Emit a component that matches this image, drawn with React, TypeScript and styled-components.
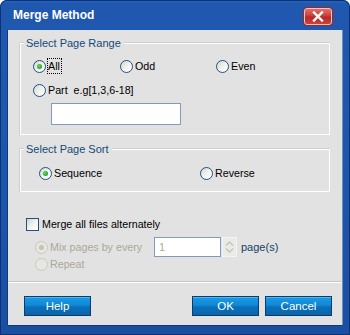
import React from "react";
import styled, { createGlobalStyle, css } from "styled-components";

const Global = createGlobalStyle`
  html, body { margin: 0; padding: 0; background: #ffffff; }
  * { box-sizing: border-box; }
  body { font-family: "Liberation Sans", Arial, sans-serif; font-size: 10.7px; }
`;

const Window = styled.div`
  width: 350px;
  height: 335px;
  display: flex;
  flex-direction: column;
  background: linear-gradient(180deg, #2b66c0 0px, #1f58ae 4px, #1d55aa 60%, #1a4fa0 100%);
  border-radius: 7px 7px 0 0;
  box-shadow: inset 0 0 0 1px #0b3278;
  padding: 0 8px 10px 8px;
`;

const TitleBar = styled.div`
  height: 30px;
  flex: none;
  display: flex;
  align-items: center;
  justify-content: space-between;
  padding: 0 10px 0 5px;
`;

const Title = styled.div`
  color: #ffffff;
  font-weight: bold;
  font-size: 12px;
  letter-spacing: 0;
`;

const CloseButton = styled.div`
  width: 28px;
  height: 17px;
  margin-top: 2px;
  border-radius: 3px;
  border: 1px solid #f2c3c0;
  background: linear-gradient(180deg, #e0716a 0%, #cc3e38 45%, #b92824 55%, #c9443e 100%);
  display: flex;
  align-items: center;
  justify-content: center;
  box-shadow: 0 0 0 1px #9b2a27;
`;

const Client = styled.div`
  flex: 1;
  display: flex;
  flex-direction: column;
  background: #e2e2e2;
  box-shadow: -1px 0 0 #0f3a7d, 0 1px 0 #0f3a7d, 1px 0 0 #6d8fc5;
`;

const Body = styled.div`
  flex: 1;
  display: flex;
  flex-direction: column;
  padding: 13px 12px 0 12px;
`;

const Group = styled.div<{ $mt?: number; $pt: number; $pb: number; $pl: number }>`
  position: relative;
  margin-top: ${(p) => p.$mt ?? 0}px;
  border: 1px solid #ffffff;
  box-shadow: 0 -1px 0 #cfcfcf, -1px 0 0 #cfcfcf;
  padding: ${(p) => p.$pt}px 0 ${(p) => p.$pb}px ${(p) => p.$pl}px;
  display: flex;
  flex-direction: column;
`;

const Legend = styled.div`
  position: absolute;
  top: -7px;
  left: 3px;
  padding: 0 3px 0 2px;
  background: #e2e2e2;
  color: #154a78;
  line-height: 13px;
  font-size: 11px;
`;

const Row = styled.div<{ $mt?: number; $ml?: number; $h?: number }>`
  display: flex;
  align-items: center;
  height: ${(p) => p.$h ?? 16}px;
  margin-top: ${(p) => p.$mt ?? 0}px;
  margin-left: ${(p) => p.$ml ?? 0}px;
`;

const Option = styled.div<{ $w?: number }>`
  display: flex;
  align-items: center;
  ${(p) => (p.$w ? css`width: ${p.$w}px;` : "")}
  flex: none;
`;

const RadioCircle = styled.span<{ $checked?: boolean; $disabled?: boolean }>`
  width: 13px;
  height: 13px;
  border-radius: 50%;
  flex: none;
  display: flex;
  align-items: center;
  justify-content: center;
  border: 1px solid ${(p) => (p.$disabled ? "#cac8bb" : "#1d5281")};
  background: ${(p) =>
    p.$disabled
      ? "#e6e6e2"
      : "linear-gradient(135deg, #d4d4ce 0%, #f4f4f2 55%, #ffffff 100%)"};
  &::after {
    content: "";
    display: ${(p) => (p.$checked ? "block" : "none")};
    width: 5px;
    height: 5px;
    border-radius: 50%;
    background: ${(p) =>
      p.$disabled ? "#c4c2b6" : "radial-gradient(circle at 40% 40%, #5fe05f, #21a121 70%)"};
  }
`;

const Label = styled.span<{ $disabled?: boolean; $focus?: boolean; $gap?: number }>`
  margin-left: ${(p) => p.$gap ?? 2}px;
  color: ${(p) => (p.$disabled ? "#aca899" : "#000000")};
  white-space: pre;
  line-height: 14px;
  ${(p) =>
    p.$focus &&
    css`
      outline: 1px dotted #000;
      outline-offset: 0px;
      padding: 0 1px 0 0;
    `}
`;

const TextBox = styled.div<{ $w: number; $h: number; $ml?: number; $mt?: number }>`
  width: ${(p) => p.$w}px;
  height: ${(p) => p.$h}px;
  margin-left: ${(p) => p.$ml ?? 0}px;
  margin-top: ${(p) => p.$mt ?? 0}px;
  background: #ffffff;
  border: 1px solid #7f9db9;
  color: #aca899;
  padding: 0 4px;
  display: flex;
  align-items: center;
  flex: none;
  font-size: 11px;
`;

const Spinner = styled.div`
  width: 15px;
  height: 20px;
  margin-left: 1px;
  border: 1px solid #f4f4f0;
  background: #ebebe6;
  display: flex;
  flex-direction: column;
  align-items: center;
  justify-content: space-evenly;
  flex: none;
`;

const CheckBox = styled.span`
  width: 13px;
  height: 13px;
  flex: none;
  border: 1px solid #1d5281;
  background: linear-gradient(135deg, #d4d4ce 0%, #f4f4f2 55%, #ffffff 100%);
`;

const PagesLabel = styled.span`
  margin-left: 4px;
  color: #153f66;
  font-size: 11px;
`;

const Footer = styled.div`
  flex: none;
  display: flex;
  align-items: center;
  border-top: 1px solid #ffffff;
  box-shadow: 0 -1px 0 #c6c6c6;
  padding: 13px 10px 9px 16px;
  gap: 6px;
`;

const Spacer = styled.div`
  flex: 1;
`;

const Button = styled.div`
  width: 67px;
  height: 20px;
  border: 1px solid #0c3c6c;
  background: linear-gradient(180deg, #1a9ae6 0%, #1289d6 45%, #0a70bb 55%, #0b64a8 100%);
  box-shadow: inset 0 1px 0 #4fb8f2;
  color: #ffffff;
  font-size: 11.5px;
  display: flex;
  align-items: center;
  justify-content: center;
`;

function Radio({
  label,
  checked,
  disabled,
  focus,
  w,
}: {
  label: string;
  checked?: boolean;
  disabled?: boolean;
  focus?: boolean;
  w?: number;
}) {
  return (
    <Option $w={w}>
      <RadioCircle $checked={checked} $disabled={disabled} />
      <Label $disabled={disabled} $focus={focus}>
        {label}
      </Label>
    </Option>
  );
}

export default function App() {
  return (
    <>
      <Global />
      <Window>
        <TitleBar>
          <Title>Merge Method</Title>
          <CloseButton>
            <svg width="12" height="11" viewBox="0 0 12 11">
              <path d="M2 1.5 L10 9.5 M10 1.5 L2 9.5" stroke="#ffffff" strokeWidth="2.4" strokeLinecap="square" />
            </svg>
          </CloseButton>
        </TitleBar>
        <Client>
          <Body>
            <Group $pt={14} $pb={9} $pl={12}>
              <Legend>Select Page Range</Legend>
              <Row>
                <Radio label="All" checked focus w={87} />
                <Radio label="Odd" w={96} />
                <Radio label="Even" />
              </Row>
              <Row $mt={8}>
                <Radio label="Part  e.g[1,3,6-18]" />
              </Row>
              <TextBox $w={130} $h={22} $ml={18} $mt={5} />
            </Group>
            <Group $mt={14} $pt={15} $pb={10} $pl={18}>
              <Legend>Select Page Sort</Legend>
              <Row>
                <Radio label="Sequence" checked w={161} />
                <Radio label="Reverse" />
              </Row>
            </Group>
            <Row $mt={24} $ml={6}>
              <CheckBox />
              <Label $gap={3}>Merge all files alternately</Label>
            </Row>
            <Row $mt={5} $ml={15} $h={20}>
              <Radio label="Mix pages by every" checked disabled w={119} />
              <TextBox $w={67} $h={20}>1</TextBox>
              <Spinner>
                <svg width="9" height="5" viewBox="0 0 9 5">
                  <path d="M1 4.5 L4.5 1 L8 4.5" fill="none" stroke="#c4c4bc" strokeWidth="1.4" />
                </svg>
                <svg width="9" height="5" viewBox="0 0 9 5">
                  <path d="M1 0.5 L4.5 4 L8 0.5" fill="none" stroke="#c4c4bc" strokeWidth="1.4" />
                </svg>
              </Spinner>
              <PagesLabel>page(s)</PagesLabel>
            </Row>
            <Row $ml={15} $h={14}>
              <Radio label="Repeat" disabled />
            </Row>
          </Body>
          <Footer>
            <Button>Help</Button>
            <Spacer />
            <Button>OK</Button>
            <Button>Cancel</Button>
          </Footer>
        </Client>
      </Window>
    </>
  );
}
